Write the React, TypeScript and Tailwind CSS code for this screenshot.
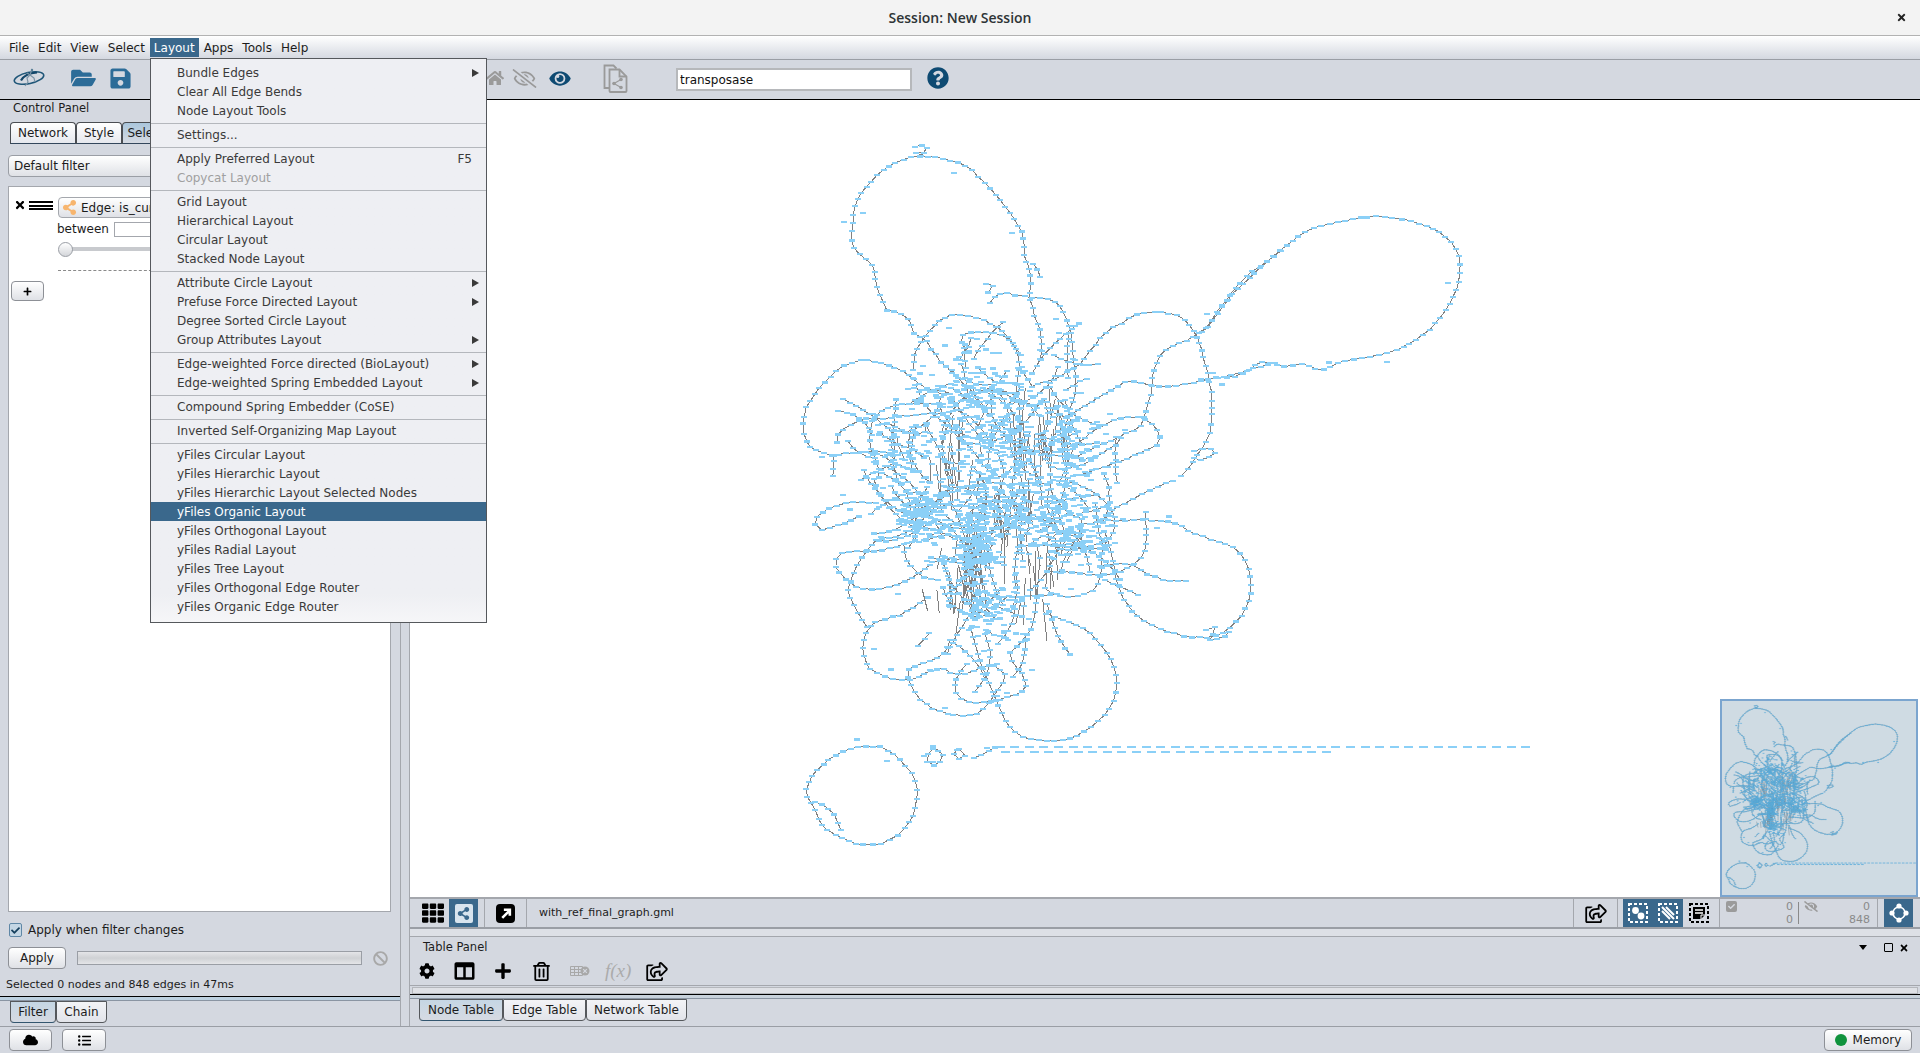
import React from "react";
import {
  FaBan,
  FaCheck,
  FaCloud,
  FaCog,
  FaColumns,
  FaEye,
  FaEyeSlash,
  FaFolderOpen,
  FaHome,
  FaListUl,
  FaPlus,
  FaQuestionCircle,
  FaRegEyeSlash,
  FaRegShareSquare,
  FaRegTrashAlt,
  FaSave,
  FaShareAlt,
  FaTh,
  FaTimes,
} from "react-icons/fa";

type Pt = [number, number];

// curves traced from the reference, in crop coordinates; see the offsets below
const TOP: Pt[][] = [
  [[320,540],[290,470],[280,410],[225,360],[218,295],[230,215],[265,165],[310,120],[370,88],[425,78],[490,85],[560,110],[620,165],[680,235],[725,310],[735,380],[750,430],[750,500],[765,560],[785,630],[780,690],[750,740]],
  [[320,540],[380,560],[400,610],[435,630],[470,680],[510,720],[560,770]],
  [[630,520],[665,490],[750,503],[820,510],[850,550],[870,600],[880,680],[885,720],[885,790],[870,840],[850,910]],
  [[400,720],[410,660],[450,600],[490,565],[540,552],[610,570],[660,600],[700,640],[730,690]],
  [[570,670],[545,640],[550,615],[610,605],[680,625],[715,680],[710,780],[700,830]],
  [[510,790],[430,770],[380,730],[320,705],[250,690],[190,710],[130,760],[85,820],[70,890],[85,945],[130,970],[170,975],[240,965],[300,975],[340,1000],[400,1020]],
  [[160,975],[160,1050]],
  [[480,820],[430,820],[350,825],[300,845],[275,885],[270,950],[290,1000],[300,1050]],
  [[490,850],[380,855],[310,865],[240,870],[180,905],[170,940]],
  [[300,905],[340,935],[400,960],[440,990]],
  [[320,880],[420,915],[445,870]],
  [[860,860],[930,820],[1000,775],[1060,752],[1120,768],[1200,765],[1280,750],[1370,730],[1440,710],[1500,695]],
  [[1500,365],[1400,440],[1330,520],[1270,600],[1220,630],[1150,665],[1120,730],[1110,800],[1085,880],[1040,910],[960,945],[880,985]],
  [[1140,920],[1120,885],[1060,860],[980,880],[900,935],[850,960]],
  [[1140,925],[1130,945],[1040,985],[960,1015],[880,1040]],
  [[1250,620],[1270,680],[1295,800],[1290,900],[1250,980],[1200,1040]],
  [[1250,620],[1200,560],[1100,548],[1040,570],[970,615],[910,690],[880,715],[830,745],[750,770]],
  [[760,400],[780,440]],
  [[620,460],[640,470],[625,490]],
  [[405,50],[440,45],[425,75],[405,70],[440,65]],
  [[1240,965],[1290,955],[1305,972],[1270,988],[1240,985]],
];

const BOTTOM: Pt[][] = [
  [[960,120],[1040,120],[1170,125],[1240,160],[1330,190],[1380,220],[1410,290],[1405,370],[1350,445],[1290,470],[1200,465],[1100,425],[1040,370],[1010,300],[990,200],[970,150]],
  [[960,260],[1040,250],[1110,285],[1170,302],[1240,300]],
  [[975,300],[1030,325],[1080,350]],
  [[820,0],[900,15],[970,60],[1000,100],[1000,155],[965,210],[965,280],[930,335],[850,350],[780,320]],
  [[1180,0],[1090,40],[1000,90],[960,125],[900,130]],
  [[1095,95],[1100,170],[1085,230],[1010,280],[900,280],[780,270]],
  [[800,400],[900,440],[960,490],[1005,570],[1005,650],[960,720],[880,770],[810,783],[720,765],[670,710],[640,640],[600,540],[570,440]],
  [[800,370],[830,460],[875,530]],
  [[770,350],[760,430],[720,490],[690,530],[730,590],[730,630],[650,660],[570,665],[530,640],[530,590],[570,540]],
  [[650,550],[610,560],[560,580],[520,580],[490,565],[440,575],[420,590],[380,600],[330,595],[270,565],[250,520],[255,470],[280,430],[370,400],[460,340]],
  [[510,480],[490,520],[430,550],[385,570],[400,630],[450,680],[520,705],[590,700],[640,650],[675,590],[640,555]],
  [[450,460],[400,510]],
  [[290,70],[200,70],[130,95],[105,125],[125,148],[190,130],[250,100]],
  [[380,190],[285,215],[200,215],[165,250],[200,300],[260,328],[340,318],[400,290],[460,250]],
  [[290,180],[240,240],[205,330],[235,400],[270,460]],
  [[370,190],[380,240],[430,290],[490,300]],
  [[300,800],[350,830],[400,890],[410,960],[385,1030],[330,1080],[260,1095],[190,1075],[130,1040],[100,980],[80,930],[110,870],[170,825],[240,800],[300,800]],
  [[105,965],[160,1000],[185,1060]],
  [[460,800],[490,825],[465,855],[438,835],[460,800]],
  [[540,805],[555,825],[530,835],[520,815],[540,805]],
  [[580,835],[650,800]],
  [[1280,450],[1310,445],[1290,480],[1330,470],[1365,445]],
];

const RIGHT_LOOP: Pt[] = [[0,540],[60,535],[120,525],[190,485],[250,500],[310,492],[370,510],[430,482],[520,468],[610,440],[680,395],[740,325],[775,250],[775,170],[730,105],[650,68],[540,50],[440,62],[340,85],[270,130],[190,195],[110,270],[60,330],[30,375],[0,400]];

// center of the hairball: cx, cy, sx, sy, loose nodes, short curved strings
const CLUSTERS = [
  [985,410,50,42,170,46],
  [975,545,15,44,170,22],
  [1010,500,40,36,120,30],
  [925,510,20,18,110,20],
  [1075,525,28,20,70,22],
  [1000,610,32,22,50,16],
  [905,450,26,26,30,10],
  [1060,450,32,32,50,16],
];

// near vertical edge bundles: x, y, spread x, spread y, count
const BUNDLES = [
  [955,470,20,22,18],
  [1040,440,20,22,24],
  [1010,510,18,28,12],
  [972,565,10,32,30],
  [1030,565,20,36,20],
  [945,590,16,22,8],
];

function rng(seed: number) {
  return () => {
    seed = (seed + 0x6d2b79f5) | 0;
    let t = Math.imul(seed ^ (seed >>> 15), 1 | seed);
    t = (t + Math.imul(t ^ (t >>> 7), 61 | t)) ^ t;
    return ((t ^ (t >>> 14)) >>> 0) / 4294967296;
  };
}

function smooth(p: Pt[]) {
  const out: Pt[] = [];
  for (let i = 0; i < p.length - 1; i++) {
    const a = p[Math.max(i - 1, 0)], b = p[i], c = p[i + 1], d = p[Math.min(i + 2, p.length - 1)];
    for (let s = 0; s < 16; s++) {
      const t = s / 16, u = t * t, v = u * t;
      out.push([
        0.5 * (2 * b[0] + (c[0] - a[0]) * t + (2 * a[0] - 5 * b[0] + 4 * c[0] - d[0]) * u + (3 * b[0] - a[0] - 3 * c[0] + d[0]) * v),
        0.5 * (2 * b[1] + (c[1] - a[1]) * t + (2 * a[1] - 5 * b[1] + 4 * c[1] - d[1]) * u + (3 * b[1] - a[1] - 3 * c[1] + d[1]) * v),
      ]);
    }
  }
  out.push(p[p.length - 1]);
  return out;
}

function buildGraph() {
  const r = rng(11);
  let edges = "";
  let nodes = "";
  const dash = (x: number, y: number, w = 6) => {
    nodes += `M${(x - w / 2).toFixed(1)} ${(y - 1).toFixed(1)}h${w}v2.2h-${w}z`;
  };
  const gauss = () => (r() + r() + r() + r() - 2) / 0.82;

  const walk = (pts: Pt[]) => {
    const line = smooth(pts);
    let left = 0;
    let d = "";
    let prev = line[0];
    for (const q of line) {
      left -= Math.hypot(q[0] - prev[0], q[1] - prev[1]);
      prev = q;
      if (left <= 0) {
        left = 6 + r() * 2.5;
        const x = q[0] + (r() - 0.5) * 1.4, y = q[1] + (r() - 0.5) * 1.4;
        d += `${d ? "L" : "M"}${x.toFixed(1)} ${y.toFixed(1)}`;
        dash(x, y);
        if (r() < 0.05) {
          const sx = x + (r() < 0.5 ? -1 : 1) * (5 + r() * 6), sy = y + (r() < 0.5 ? -7 : 7);
          dash(sx, sy);
        }
      }
    }
    edges += d;
  };

  TOP.forEach((c) => walk(c.map(([x, y]): Pt => [780 + x / 3, 130 + y / 3])));
  BOTTOM.forEach((c) => walk(c.map(([x, y]): Pt => [780 + x / 3, 480 + y / 3])));
  walk(RIGHT_LOOP.map(([x, y]): Pt => [1200 + x / 3, 200 + y / 3]));

  for (const [cx, cy, sx, sy, , strings] of CLUSTERS) {
    for (let i = 0; i < strings; i++) {
      let x = cx + gauss() * sx, y = cy + gauss() * sy;
      let a = r() * Math.PI * 2;
      const bend = (r() - 0.5) * 0.7;
      const pts: Pt[] = [[x, y]];
      const n = 2 + Math.floor(r() * 4);
      for (let k = 0; k < n; k++) {
        a += bend;
        x += Math.cos(a) * 13;
        y += Math.sin(a) * 13;
        pts.push([x, y]);
      }
      walk(pts);
    }
  }
  for (const [cx, cy, sx, sy, n] of BUNDLES) {
    for (let i = 0; i < n; i++) {
      const x = cx + gauss() * sx, y = cy + gauss() * sy;
      const h = 10 + r() * 16, lean = (r() - 0.5) * 12;
      edges += `M${x.toFixed(1)} ${(y - h).toFixed(1)}L${(x + lean).toFixed(1)} ${(y + h).toFixed(1)}`;
    }
  }
  // loose nodes of the hairball
  for (const [cx, cy, sx, sy, n] of CLUSTERS) {
    for (let i = 0; i < n; i++) dash(cx + gauss() * sx, cy + gauss() * sy);
  }

  // isolated pairs along the bottom
  for (let x = 1000; x < 1528; x += 14.6) dash(x, 747, 9);
  for (let x = 1005; x < 1337; x += 14.6) dash(x, 752, 9);

  return { edges, nodes };
}

const GRAPH = buildGraph();

function Graph({ bird }: { bird?: boolean }) {
  return (
    <g shapeRendering={bird ? "auto" : "crispEdges"}>
      <path d={GRAPH.edges} fill="none" stroke={bird ? "#6d8594" : "#808080"} strokeWidth={bird ? 1.8 : 1} />
      <path d={GRAPH.nodes} fill={bird ? "#63b1de" : "#8bd0f7"} stroke={bird ? "#63b1de" : "none"} strokeWidth={bird ? 0.8 : 0} />
    </g>
  );
}

const MENU: { label: string; arrow?: boolean; key?: string; off?: boolean; on?: boolean }[][] = [
  [{ label: "Bundle Edges", arrow: true }, { label: "Clear All Edge Bends" }, { label: "Node Layout Tools" }],
  [{ label: "Settings..." }],
  [{ label: "Apply Preferred Layout", key: "F5" }, { label: "Copycat Layout", off: true }],
  [{ label: "Grid Layout" }, { label: "Hierarchical Layout" }, { label: "Circular Layout" }, { label: "Stacked Node Layout" }],
  [{ label: "Attribute Circle Layout", arrow: true }, { label: "Prefuse Force Directed Layout", arrow: true }, { label: "Degree Sorted Circle Layout" }, { label: "Group Attributes Layout", arrow: true }],
  [{ label: "Edge-weighted Force directed (BioLayout)", arrow: true }, { label: "Edge-weighted Spring Embedded Layout", arrow: true }],
  [{ label: "Compound Spring Embedder (CoSE)" }],
  [{ label: "Inverted Self-Organizing Map Layout" }],
  [
    { label: "yFiles Circular Layout" },
    { label: "yFiles Hierarchic Layout" },
    { label: "yFiles Hierarchic Layout Selected Nodes" },
    { label: "yFiles Organic Layout", on: true },
    { label: "yFiles Orthogonal Layout" },
    { label: "yFiles Radial Layout" },
    { label: "yFiles Tree Layout" },
    { label: "yFiles Orthogonal Edge Router" },
    { label: "yFiles Organic Edge Router" },
  ],
];

function LayoutMenu() {
  return (
    <div className="absolute left-[150px] top-[58px] z-20 h-[565px] w-[337px] border border-[#55585c] bg-gradient-to-b from-[#eeeff3] from-95% to-[#f6f6f8] text-[#3a3a3a]">
      {MENU.map((group, i) => (
        <div key={i} className={`border-[#b4b7bc] pb-[3px] ${i === 0 ? "pt-1" : "border-t pt-px"}`}>
          {group.map((item) => (
            <div
              key={item.label}
              className={`flex h-[19px] items-center pl-[26px] pr-[2px] ${item.on ? "bg-[#3a688c] text-white" : ""} ${item.off ? "text-[#a0a0a0]" : ""}`}
            >
              <span className="flex-1 whitespace-nowrap">{item.label}</span>
              {item.key && <span className="mr-[12px]">{item.key}</span>}
              {item.arrow && <span className="mr-[5px] h-0 w-0 border-y-[4px] border-l-[7px] border-y-transparent border-l-[#3a3a3a]" />}
            </div>
          ))}
        </div>
      ))}
    </div>
  );
}

function Tab({ label, on, className }: { label: string; on?: boolean; className?: string }) {
  return (
    <div
      className={`flex h-[22px] items-center justify-center rounded-t-[4px] border border-[#4a4d52] border-b-[#33475c] ${
        on ? "bg-gradient-to-b from-[#aac6dc] to-[#d6dae2]" : "bg-gradient-to-b from-white to-[#e6e8ee]"
      } ${className ?? ""}`}
    >
      {label}
    </div>
  );
}

function BottomTab({ label, on, width }: { label: string; on?: boolean; width: string }) {
  return (
    <div
      className={`flex h-[22px] items-center justify-center rounded-b-[4px] border border-[#55585c] ${width} ${
        on ? "border-b-[#33566f] bg-gradient-to-b from-[#c5d6e4] to-[#d6dae2]" : "bg-gradient-to-b from-[#f3f4f7] to-[#e2e4ea]"
      }`}
    >
      {label}
    </div>
  );
}

function CytoscapeLogo() {
  return (
    <svg viewBox="0 0 32 20" className="h-[20px] w-[32px]">
      <ellipse cx="16" cy="10" rx="15" ry="5.6" transform="rotate(-12 16 10)" fill="none" stroke="#1f5678" strokeWidth="1.6" />
      <path d="M8 12.5C11 7 16 5 24 4.5" fill="none" stroke="#14476a" strokeWidth="2.2" />
      <path d="M19 1l-2 6-3 3 1 4-3 4M17 7l4 3 1 4M14 5l3 2" fill="none" stroke="#7b93a6" strokeWidth="1.2" />
      <circle cx="19" cy="2" r="1.2" fill="#5d8198" />
    </svg>
  );
}

function DocShareIcon() {
  return (
    <svg viewBox="0 0 25 29" className="h-[29px] w-[25px]" fill="none" stroke="#9a9a9a" strokeWidth="1.8">
      <path d="M6 24H1.5V1.5h9l3 3" />
      <path d="M6.5 5.5h10l7 7v14.5a1 1 0 0 1-1 1h-15a1 1 0 0 1-1-1z" />
      <path d="M16.5 5.5v7h7" />
      <circle cx="11" cy="19.5" r="1.8" fill="#9a9a9a" stroke="none" />
      <circle cx="18" cy="15.5" r="1.8" fill="#9a9a9a" stroke="none" />
      <circle cx="18" cy="23.5" r="1.8" fill="#9a9a9a" stroke="none" />
      <path d="M18 15.5l-7 4 7 4" strokeWidth="1.2" />
    </svg>
  );
}

function SelectionIcon({ kind }: { kind: "nodes" | "edges" | "notes" }) {
  const c = kind === "notes" ? "#000000" : "#ffffff";
  return (
    <svg viewBox="0 0 20 20" className="h-[20px] w-[20px]">
      <rect x="1" y="1" width="18" height="18" fill="none" stroke={c} strokeWidth="2" strokeDasharray="3 2" />
      {kind === "nodes" && (
        <>
          <circle cx="7.5" cy="7.5" r="3.4" fill={c} />
          <circle cx="13" cy="13" r="3.4" fill={c} />
        </>
      )}
      {kind === "edges" && <path d="M4 8l8 8M4 4l12 12M8 4l8 8" stroke={c} strokeWidth="2" />}
      {kind === "notes" && (
        <>
          <path d="M4 4h12v8l-4 4H4z" fill="#000000" />
          <path d="M6 7h8M6 10h8" stroke="#ffffff" strokeWidth="1.4" />
          <path d="M12 16v-4h4" fill="none" stroke="#ffffff" strokeWidth="1" />
        </>
      )}
    </svg>
  );
}

function TableDeleteIcon() {
  return (
    <svg viewBox="0 0 20 12" className="h-[12px] w-[20px]" fill="none" stroke="#a8a8a8" strokeWidth="1">
      <path d="M.5 1.5h12v9H.5zM.5 4.5h12M.5 7.5h12M4.5 1.5v9M8.5 1.5v9" />
      <circle cx="15" cy="6" r="4.5" fill="#a8a8a8" stroke="none" />
      <path d="M13.2 4.2l3.6 3.6M16.8 4.2l-3.6 3.6" stroke="#d4d8e0" strokeWidth="1.2" />
    </svg>
  );
}

function LocateIcon() {
  return (
    <svg viewBox="0 0 22 22" className="h-[22px] w-[22px]" fill="#ffffff">
      <circle cx="11" cy="11" r="6" fill="none" stroke="#ffffff" strokeWidth="1.6" />
      <circle cx="11" cy="4" r="2.6" />
      <circle cx="11" cy="18" r="2.6" />
      <circle cx="4" cy="11" r="2.6" />
      <circle cx="18" cy="11" r="2.6" />
    </svg>
  );
}

function Divider({ className }: { className?: string }) {
  return <div className={`h-full w-px bg-[#a4a7ad] ${className ?? ""}`} />;
}

export default function App() {
  return (
    <div className="relative flex h-[1053px] w-[1920px] flex-col overflow-hidden bg-[#d4d8e0] font-['DejaVu_Sans',sans-serif] text-[12px] text-[#1c1c1c]">
      {/* title bar */}
      <div className="relative flex h-[36px] items-center justify-center border-b border-[#b2b2b2] bg-[#f3f3f3]">
        <span className="font-['Open_Sans',sans-serif] text-[14px] font-semibold text-[#2e3436]">Session: New Session</span>
        <FaTimes className="absolute right-[13px] top-[12px] h-[11px] w-[11px] text-[#222222]" />
      </div>

      {/* menu bar */}
      <div className="flex h-[24px] items-end gap-px border-b border-[#9a9ea5] bg-gradient-to-b from-white to-[#d4d8e0] pb-[2px] pl-[5px]">
        {["File", "Edit", "View", "Select", "Layout", "Apps", "Tools", "Help"].map((m) => (
          <div key={m} className={`flex h-[19px] items-center px-1 ${m === "Layout" ? "bg-[#3a688c] text-white" : ""}`}>
            {m}
          </div>
        ))}
      </div>

      {/* toolbar */}
      <div className="flex h-[40px] items-center border-b border-black pb-[3px] pl-[13px]">
        <CytoscapeLogo />
        <FaFolderOpen className="ml-[26px] h-[22px] w-[25px] text-[#2c6c98]" />
        <FaSave className="ml-[13px] h-[23px] w-[23px] text-[#2c6c98]" />
        <FaHome className="ml-[354px] h-[16px] w-[18px] text-[#9a9a9a]" />
        <FaRegEyeSlash className="ml-[8px] h-[19px] w-[25px] text-[#999999]" />
        <FaEye className="ml-[10px] h-[19px] w-[26px] text-[#0e4a72]" />
        <div className="ml-[30px]"><DocShareIcon /></div>
        <input
          readOnly
          value="transposase"
          className="ml-[48px] mt-[3px] h-[23px] w-[236px] border-2 border-[#b6b8bb] bg-white px-[2px] text-[12px] text-[#111111] outline-none"
        />
        <FaQuestionCircle className="ml-[15px] h-[22px] w-[22px] text-[#0e4a72]" />
      </div>

      <div className="flex min-h-0 flex-1">
        {/* control panel */}
        <div className="flex w-[400px] flex-col">
          <div className="flex h-[18px] items-center pl-[13px] text-[11.5px]">Control Panel</div>
          <div className="mt-[4px] flex pl-[10px]">
            <Tab label="Network" className="w-[66px]" />
            <Tab label="Style" className="w-[46px]" />
            <Tab label="Select" on className="w-[48px]" />
          </div>
          <div className="ml-[8px] mr-[9px] mt-[11px] flex h-[22px] items-center rounded-[4px] border border-[#9a9ea5] bg-gradient-to-b from-white to-[#dfe1e6] pl-[5px]">
            Default filter
          </div>
          <div className="ml-[8px] mr-[9px] mt-[9px] min-h-0 flex-1 border border-[#a4a7ad] bg-white pl-[5px] pt-[11px]">
            <div className="flex">
              <FaTimes className="mt-px h-[12px] w-[12px] text-black" />
              <div className="ml-[3px] mt-[3px] flex h-[9px] w-[24px] flex-col justify-between">
                <div className="h-[2px] bg-black" />
                <div className="h-[2px] bg-black" />
                <div className="h-[2px] bg-black" />
              </div>
              <div className="ml-[5px] flex w-[200px] flex-col">
                <div className="-mt-px flex h-[21px] items-center rounded-[4px] border border-[#a4a7ad] bg-gradient-to-b from-white to-[#dfe1e6] pl-[3px]">
                  <FaShareAlt className="h-[15px] w-[15px] text-[#f7b56e]" />
                  <span className="ml-[4px]">Edge: is_curated</span>
                </div>
                <div className="-ml-px mt-[1px] flex h-[20px] items-center">
                  between
                  <div className="ml-[5px] h-[15px] w-[60px] border border-[#a4a7ad] bg-white" />
                </div>
                <div className="relative mt-[3px] h-[15px]">
                  <div className="absolute left-[4px] right-0 top-[5px] h-[4px] rounded-sm bg-[#c8cace]" />
                  <div className="absolute left-0 top-0 h-[15px] w-[15px] rounded-full border border-[#9a9ea5] bg-gradient-to-b from-white to-[#d4d6da]" />
                </div>
                <div className="mt-[13px] border-t border-dashed border-[#8a8a8a]" />
              </div>
            </div>
            <div className="mt-[10px] flex h-[20px] w-[33px] -translate-x-[3px] items-center justify-center rounded-[4px] border border-[#8d9096] bg-gradient-to-b from-white to-[#dfe1e6]">
              <FaPlus className="h-[9px] w-[9px] text-black" />
            </div>
          </div>
          <div className="mt-[11px] flex h-[14px] items-center pl-[9px]">
            <div className="flex h-[14px] w-[13px] items-center justify-center rounded-[2px] border border-[#5f87a6] bg-[#c4d6e4]">
              <FaCheck className="h-[9px] w-[9px] text-[#17405e]" />
            </div>
            <span className="ml-[6px]">Apply when filter changes</span>
          </div>
          <div className="mt-[10px] flex h-[22px] items-center pl-[8px]">
            <div className="flex h-[22px] w-[58px] items-center justify-center rounded-[4px] border border-[#8d9096] bg-gradient-to-b from-white to-[#dfe1e6]">
              Apply
            </div>
            <div className="ml-[11px] h-[14px] w-[285px] border border-[#9a9ea5] bg-gradient-to-b from-[#e4e5e8] via-[#cfd1d4] to-[#e4e5e8]" />
            <FaBan className="ml-[11px] h-[15px] w-[15px] text-[#a8a8a8]" />
          </div>
          <div className="flex h-[24px] items-end pl-[6px] text-[11px]">Selected 0 nodes and 848 edges in 47ms</div>
          <div className="mt-[3px] h-[5px] border-y border-b-[#8a95a3] border-t-black bg-[#bcd0e0]" />
          <div className="flex pl-[10px]">
            <BottomTab label="Filter" on width="w-[46px]" />
            <BottomTab label="Chain" width="w-[51px]" />
          </div>
          <div className="h-[3px]" />
        </div>

        {/* splitter */}
        <div className="w-[10px] border-x border-[#a4a7ad]" />

        {/* network view and table panel */}
        <div className="flex min-w-0 flex-1 flex-col">
          <div className="relative min-h-0 flex-1 bg-white">
            <svg viewBox="410 100 1510 797" className="h-full w-full">
              <Graph />
            </svg>
            <div className="absolute bottom-0 right-[2px] h-[198px] w-[198px] border-2 border-[#7ba5cf] bg-[#cfdbe3]">
              <svg viewBox="790 128 741 741" className="h-full w-full">
                <Graph bird />
              </svg>
            </div>
          </div>

          {/* network status bar */}
          <div className="flex h-[32px] items-center border-y-2 border-t-[#a4a7ad] border-b-[#9a9ea5] pr-[7px]">
            <FaTh className="ml-[12px] h-[22px] w-[22px] text-black" />
            <div className="ml-[5px] flex h-full w-[29px] items-center justify-center bg-[#3a688c]">
              <div className="flex h-[19px] w-[18px] items-center justify-center rounded-[2px] bg-[#d8e4ee]">
                <FaShareAlt className="h-[13px] w-[13px] text-[#3a688c]" />
              </div>
            </div>
            <Divider className="ml-[6px]" />
            <div className="ml-[11px] flex h-[19px] w-[19px] items-center justify-center rounded-[4px] bg-black">
              <svg viewBox="0 0 12 12" className="h-[13px] w-[13px]">
                <path d="M3 10l6-6M4.5 2.5H10V8" fill="none" stroke="#ffffff" strokeWidth="2.4" />
              </svg>
            </div>
            <Divider className="ml-[11px]" />
            <span className="ml-[12px] flex-1 text-[11px]">with_ref_final_graph.gml</span>
            <Divider />
            <FaRegShareSquare className="ml-[11px] h-[19px] w-[22px] text-black" />
            <Divider className="ml-[10px]" />
            <div className="ml-[5px] flex h-full w-[60px] items-center justify-center gap-[10px] bg-[#3a688c]">
              <SelectionIcon kind="nodes" />
              <SelectionIcon kind="edges" />
            </div>
            <div className="ml-[6px]"><SelectionIcon kind="notes" /></div>
            <Divider className="ml-[10px]" />
            <div className="relative h-full w-[157px] text-right text-[11px] leading-[13px] text-[#8a8a8a]">
              <div className="absolute left-[6px] top-[2px] flex h-[11px] w-[11px] items-center justify-center rounded-[2px] bg-[#9b9b9b]">
                <FaCheck className="h-[7px] w-[7px] text-[#d4d8e0]" />
              </div>
              <div className="absolute left-0 top-[1px] w-[73px]">0<br />0</div>
              <div className="absolute left-[78px] top-[3px] h-[22px] w-px bg-[#8a8a8a]" />
              <FaEyeSlash className="absolute left-[84px] top-[2px] h-[11px] w-[14px] text-[#9b9b9b]" />
              <div className="absolute right-[7px] top-[1px]">0<br />848</div>
            </div>
            <Divider />
            <div className="ml-[6px] flex h-full w-[29px] items-center justify-center bg-[#3a688c]">
              <LocateIcon />
            </div>
          </div>

          <div className="h-[8px] border-b border-[#a4a7ad] bg-[#dde0e6]" />

          {/* table panel */}
          <div className="flex h-[89px] flex-col">
            <div className="flex h-[20px] items-center pl-[13px] pt-px text-[11.5px]">
              <span className="flex-1">Table Panel</span>
              <div className="mr-[17px] h-0 w-0 border-x-[4px] border-t-[5px] border-x-transparent border-t-black" />
              <div className="h-[9px] w-[9px] rounded-[1px] border border-black" />
              <FaTimes className="ml-[6px] mr-[11px] h-[10px] w-[10px] text-black" />
            </div>
            <div className="flex h-[28px] items-center pl-[9px]">
              <FaCog className="h-[16px] w-[16px] text-black" />
              <FaColumns className="ml-[19px] h-[20px] w-[21px] text-black" />
              <FaPlus className="ml-[19px] h-[18px] w-[18px] text-black" />
              <FaRegTrashAlt className="ml-[21px] h-[19px] w-[17px] text-black" />
              <div className="ml-[20px]"><TableDeleteIcon /></div>
              <span className="ml-[15px] font-['Liberation_Serif',serif] text-[19px] italic text-[#ababab]">f(x)</span>
              <FaRegShareSquare className="ml-[15px] h-[19px] w-[22px] text-black" />
            </div>
            <div className="flex h-[9px] items-stretch border-t border-[#a4a7ad] pl-[2px] pr-[2px] pt-[1px]">
              <div className="flex-1 border border-[#b4b7bc] bg-[#dfe1e6]" />
            </div>
            <div className="h-[5px] border-y border-b-[#8a95a3] border-t-black bg-[#c8d2dc]" />
            <div className="flex pl-[9px]">
              <BottomTab label="Node Table" on width="w-[84px]" />
              <BottomTab label="Edge Table" width="w-[83px]" />
              <BottomTab label="Network Table" width="w-[101px]" />
            </div>
          </div>
        </div>
      </div>

      {/* bottom strip */}
      <div className="flex h-[27px] items-center border-t border-[#9a9ea5] pl-[9px] pr-[8px]">
        <div className="flex h-[22px] w-[43px] items-center justify-center rounded-[4px] border border-[#8d9096] bg-gradient-to-b from-white to-[#dfe1e6]">
          <FaCloud className="h-[14px] w-[15px] text-black" />
        </div>
        <div className="ml-[10px] flex h-[22px] w-[44px] items-center justify-center rounded-[4px] border border-[#8d9096] bg-gradient-to-b from-white to-[#dfe1e6]">
          <FaListUl className="h-[13px] w-[15px] text-black" />
        </div>
        <div className="ml-auto flex h-[22px] w-[88px] items-center justify-center gap-[6px] rounded-[4px] border border-[#8d9096] bg-gradient-to-b from-white to-[#dfe1e6]">
          <div className="h-[12px] w-[12px] rounded-full bg-[#10933d]" />
          Memory
        </div>
      </div>

      <LayoutMenu />
    </div>
  );
}
